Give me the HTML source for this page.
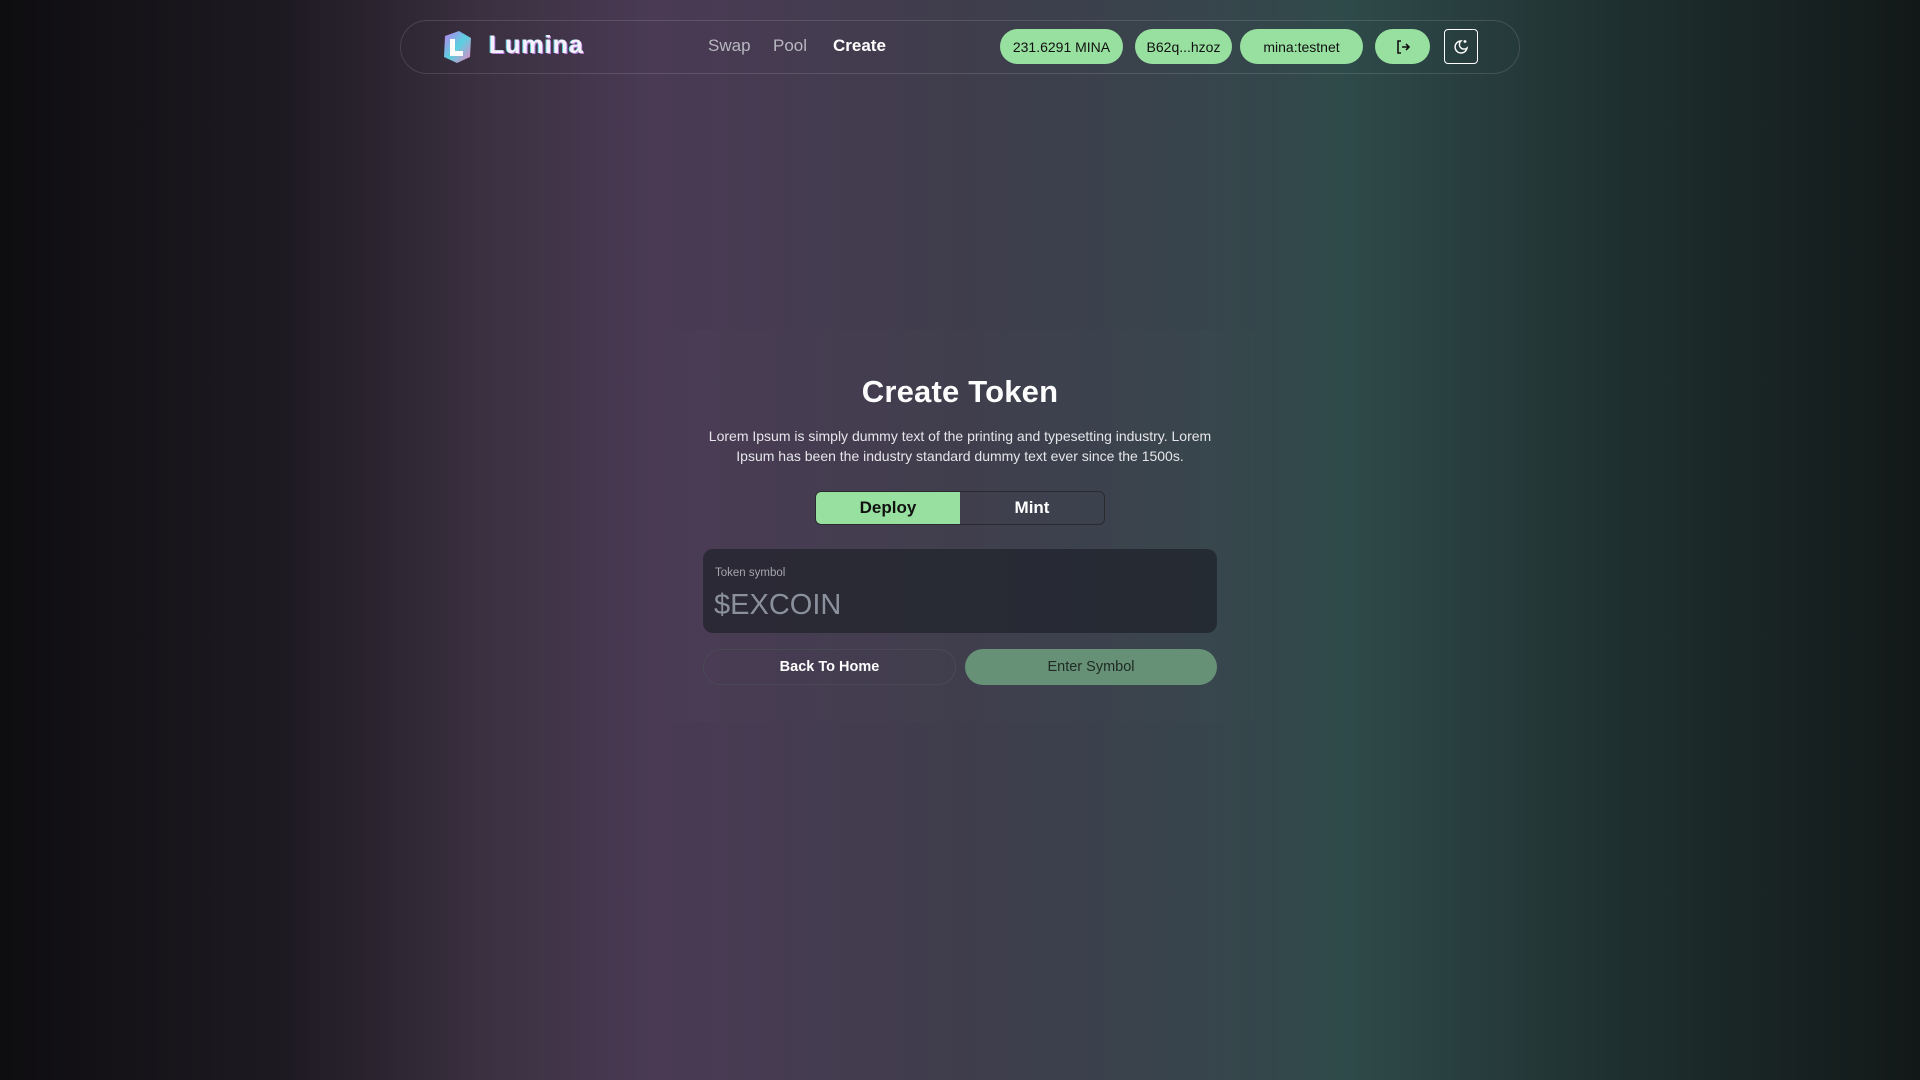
<!DOCTYPE html>
<html><head><meta charset="utf-8"><style>
*{margin:0;padding:0;box-sizing:border-box}
body{width:1920px;height:1080px;overflow:hidden;font-family:"Liberation Sans",sans-serif;color:#fff;
background:linear-gradient(90deg,#0e0d10 0%,#1e1a22 15%,#3a3040 25%,#4a3a54 34%,#3f3d4c 50%,#38444c 62%,#2f4a4a 70%,#1e2e2e 85%,#121818 100%);position:relative}
.hdr{position:absolute;left:400px;top:20px;width:1120px;height:54px;border:1px solid rgba(255,255,255,.13);border-radius:27px}
.abs{position:absolute}
.nav{font-size:17px;top:36px;color:#b8b8c0}
.pill{position:absolute;top:29px;height:35px;border-radius:18px;background:#98e0a0;color:#111;font-size:14px;display:flex;align-items:center;justify-content:center}
.card{position:absolute;left:665px;top:330px;width:590px;height:392px;background:rgba(255,255,255,.008);border-radius:8px}
</style></head><body>
<div class="hdr"></div>
<svg class="abs" style="left:441px;top:30px" width="32" height="34" viewBox="0 0 32 34">
<defs><linearGradient id="g" x1="0" y1="0" x2="1" y2="1"><stop offset="0" stop-color="#c07df0"/><stop offset=".5" stop-color="#5ad0e0"/><stop offset="1" stop-color="#f080c0"/></linearGradient></defs>
<path d="M4 6 L18 1 L30 8 L29 27 L16 33 L3 27 Z" fill="url(#g)"/>
<path d="M9 9 H14 V21 H22 V26 H9 Z" fill="#fff"/></svg>
<div class="abs" style="left:489px;top:31px;font-size:25px;font-weight:bold;color:#f4f0ff;letter-spacing:1px;text-shadow:1px 1px 0 #c080e0,-1px 0 0 #60d0e0">Lumina</div>
<div class="abs nav" style="left:708px">Swap</div>
<div class="abs nav" style="left:773px">Pool</div>
<div class="abs nav" style="left:833px;color:#fff;font-weight:bold">Create</div>
<div class="pill" style="left:1000px;width:123px">231.6291 MINA</div>
<div class="pill" style="left:1135px;width:97px">B62q...hzoz</div>
<div class="pill" style="left:1240px;width:123px">mina:testnet</div>
<div class="pill" style="left:1375px;width:55px"><svg width="16" height="16" viewBox="0 0 16 16" fill="none" stroke="#111" stroke-width="1.6"><path d="M6 2H3v12h3M7 8h7M11 5l3 3-3 3"/></svg></div>
<div class="abs" style="left:1444px;top:29px;width:34px;height:35px;border:1.5px solid #fff;border-radius:4px;display:flex;align-items:center;justify-content:center"><svg width="16" height="16" viewBox="0 0 16 16" fill="none" stroke="#fff" stroke-width="1.4"><path d="M8 2a6 6 0 1 0 6 7A4.5 4.5 0 0 1 8 2z"/><path d="M12 1v3M10.5 2.5h3"/></svg></div>
<div class="card"></div>
<div class="abs" style="left:660px;width:600px;top:374px;text-align:center;font-size:31px;font-weight:bold;letter-spacing:0.2px">Create Token</div>
<div class="abs" style="left:690px;width:540px;top:426px;text-align:center;font-size:14px;line-height:20px;color:#e6e6ea">Lorem Ipsum is simply dummy text of the printing and typesetting industry. Lorem Ipsum has been the industry standard dummy text ever since the 1500s.</div>
<div class="abs" style="left:815px;top:491px;width:290px;height:34px;border:1px solid #2a2a30;border-radius:6px;overflow:hidden;display:flex;font-size:17px;font-weight:bold">
<div style="width:50%;background:#98e0a0;color:#111;display:flex;align-items:center;justify-content:center">Deploy</div>
<div style="width:50%;display:flex;align-items:center;justify-content:center">Mint</div></div>
<div class="abs" style="left:703px;top:549px;width:514px;height:84px;background:linear-gradient(90deg,#2b2935,#252b33);border-radius:10px">
<div class="abs" style="left:12px;top:18px;font-size:11.5px;color:#a6a6ae">Token symbol</div>
<div class="abs" style="left:11px;top:40px;font-size:29px;color:#8a909c">$EXCOIN</div></div>
<div class="abs" style="left:703px;top:649px;width:253px;height:36px;border:1px solid #4a4a55;border-radius:18px;display:flex;align-items:center;justify-content:center;font-size:14.5px;font-weight:bold">Back To Home</div>
<div class="abs" style="left:965px;top:649px;width:252px;height:36px;background:#679177;border-radius:18px;display:flex;align-items:center;justify-content:center;font-size:14.5px;color:#1e2a22">Enter Symbol</div>
</body></html>
